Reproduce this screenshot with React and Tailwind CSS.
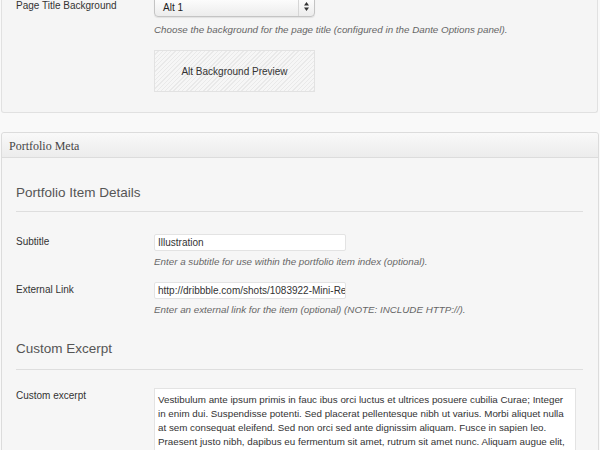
import React from 'react';

const sans = { fontFamily: '"Liberation Sans", Arial, sans-serif' };

const Field = ({ label, value, help }) => (
  <div className="flex">
    <div className="w-[138px] shrink-0 text-[10px] leading-[15px] text-[#333]">{label}</div>
    <div className="flex flex-col">
      <div className="w-[192px] h-[17px] bg-white border border-[#e3e3e3] rounded-[2px] px-[3px] text-[10px] leading-[15px] text-[#333] overflow-hidden whitespace-nowrap">
        {value}
      </div>
      <p className="mt-[4px] text-[9.8px] leading-[14px] italic text-[#666]">{help}</p>
    </div>
  </div>
);

export default function App() {
  return (
    <div className="w-[600px] h-[450px] overflow-hidden bg-[#f9f9f9]" style={sans}>
      {/* top panel, cut by the top of the window */}
      <div className="flow-root ml-[1px] mr-[2px] bg-[#f5f5f5] border border-t-0 border-[#e1e1e1] rounded-b-[3px] h-[113px]">
        <div className="flex pl-[14px] -mt-[4px]">
          <div className="w-[138px] shrink-0 pt-[2px] text-[10px] leading-[15px] text-[#333]">Page Title Background</div>
          <div className="flex flex-col">
            <div className="w-[161px] h-[21px] flex items-center rounded-[4px] border border-[#c4c4c4] bg-gradient-to-b from-white to-[#ececec] shadow-[0_1px_1px_rgba(0,0,0,0.08)]">
              <span className="flex-1 pl-[8px] pt-[2px] text-[10px] text-[#222]">Alt 1</span>
              <div className="w-[16px] h-full border-l border-[#d6d6d6] flex items-center justify-center">
                <svg width="5" height="9" viewBox="0 0 5 9">
                  <path d="M2.5 0 L5 3.5 L0 3.5 Z" fill="#333" />
                  <path d="M2.5 9 L5 5.5 L0 5.5 Z" fill="#333" />
                </svg>
              </div>
            </div>
            <p className="mt-[5px] text-[9.8px] leading-[15px] italic text-[#666]">
              Choose the background for the page title (configured in the Dante Options panel).
            </p>
            <div className="mt-[13px] w-[161px] h-[42px] border border-[#e2e2e2] flex items-center justify-center text-[10px] text-[#333] bg-[repeating-linear-gradient(135deg,#f6f6f6_0px,#f6f6f6_2px,#e9e9e9_2px,#e9e9e9_3px)]">
              Alt Background Preview
            </div>
          </div>
        </div>
      </div>

      {/* Portfolio Meta panel */}
      <div className="mt-[19px] ml-[1px] mr-[1px] bg-[#f6f6f6] border border-[#dcdcdc] rounded-t-[3px] h-[400px]">
        <div className="h-[25px] flex items-center pl-[7px] border-b border-[#dcdcdc] bg-gradient-to-b from-[#f9f9f9] to-[#ececec] rounded-t-[3px]">
          <span className="text-[12px] text-[#464646] pt-[1px]" style={{ fontFamily: '"Liberation Serif", Georgia, serif' }}>
            Portfolio Meta
          </span>
        </div>

        <div className="px-[14px]">
          <h3 className="mt-[27px] text-[13.5px] text-[#555] leading-[16px]">Portfolio Item Details</h3>
          <div className="mt-[10px] h-px bg-[#dedede] mr-[1px]" />

          <div className="mt-[22px] flex flex-col gap-[13px]">
            <Field label="Subtitle" value="Illustration" help="Enter a subtitle for use within the portfolio item index (optional)." />
            <Field
              label="External Link"
              value="http://dribbble.com/shots/1083922-Mini-Re"
              help="Enter an external link for the item (optional) (NOTE: INCLUDE HTTP://)."
            />
          </div>

          <h3 className="mt-[24px] text-[13.5px] text-[#555] leading-[16px]">Custom Excerpt</h3>
          <div className="mt-[12px] h-px bg-[#dedede] mr-[1px]" />

          <div className="mt-[18px] flex">
            <div className="w-[138px] shrink-0 text-[10px] leading-[15px] text-[#333]">Custom excerpt</div>
            <div className="w-[422px] h-[80px] bg-white border border-[#e3e3e3] px-[3px] pt-[4px] text-[9.8px] leading-[14px] text-[#333] overflow-hidden">
              Vestibulum ante ipsum primis in fauc ibus orci luctus et ultrices posuere cubilia Curae; Integer in enim dui. Suspendisse potenti. Sed placerat pellentesque nibh ut varius. Morbi aliquet nulla at sem consequat eleifend. Sed non orci sed ante dignissim aliquam. Fusce in sapien leo. Praesent justo nibh, dapibus eu fermentum sit amet, rutrum sit amet nunc. Aliquam augue elit, dapibus non eleifend eu, imperdiet gravida odio. Maecenas blandit, nunc sed consectetur
            </div>
          </div>
        </div>
      </div>
    </div>
  );
}
